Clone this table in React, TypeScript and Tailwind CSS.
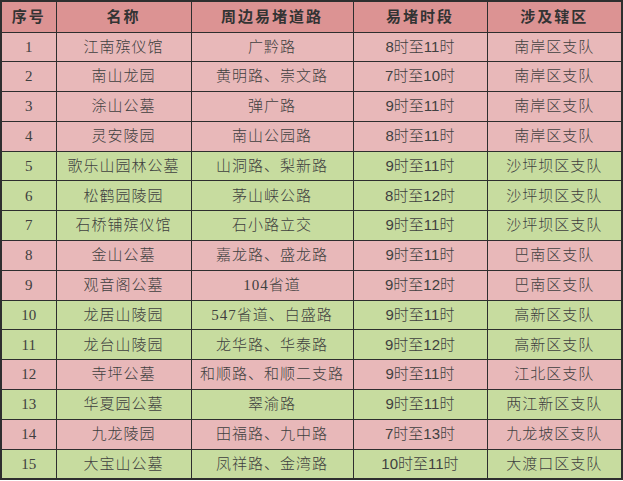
const rows: [string, string, string, string, string, boolean][] = [
  ["1", "江南殡仪馆", "广黔路", "8时至11时", "南岸区支队", false],
  ["2", "南山龙园", "黄明路、崇文路", "7时至10时", "南岸区支队", false],
  ["3", "涂山公墓", "弹广路", "9时至11时", "南岸区支队", false],
  ["4", "灵安陵园", "南山公园路", "8时至11时", "南岸区支队", false],
  ["5", "歌乐山园林公墓", "山洞路、梨新路", "9时至11时", "沙坪坝区支队", true],
  ["6", "松鹤园陵园", "茅山峡公路", "8时至12时", "沙坪坝区支队", true],
  ["7", "石桥铺殡仪馆", "石小路立交", "9时至11时", "沙坪坝区支队", true],
  ["8", "金山公墓", "嘉龙路、盛龙路", "9时至11时", "巴南区支队", false],
  ["9", "观音阁公墓", "104省道", "9时至12时", "巴南区支队", false],
  ["10", "龙居山陵园", "547省道、白盛路", "9时至11时", "高新区支队", true],
  ["11", "龙台山陵园", "龙华路、华泰路", "9时至12时", "高新区支队", true],
  ["12", "寺坪公墓", "和顺路、和顺二支路", "9时至11时", "江北区支队", false],
  ["13", "华夏园公墓", "翠渝路", "9时至11时", "两江新区支队", true],
  ["14", "九龙陵园", "田福路、九中路", "7时至13时", "九龙坡区支队", false],
  ["15", "大宝山公墓", "凤祥路、金湾路", "10时至11时", "大渡口区支队", true],
];

const serif = "font-['Liberation_Serif','Noto_Sans_CJK_SC',serif]";
const sans = "font-['Liberation_Sans','Noto_Sans_CJK_SC',sans-serif]";

export default function App() {
  return (
    <div className="w-[623px] h-[481px] bg-white">
      <table className="w-[621px] table-fixed border-collapse border-2 border-[#2e2e2e] text-[#404040]">
        <colgroup>
          <col className="w-[55px]" />
          <col className="w-[135px]" />
          <col className="w-[162px]" />
          <col className="w-[134px]" />
          <col className="w-[135px]" />
        </colgroup>
        <thead>
          <tr className="h-[31px] bg-[#dc9393]">
            {["序号", "名称", "周边易堵道路", "易堵时段", "涉及辖区"].map((h) => (
              <th
                key={h}
                className={`border border-[#2e2e2e] p-0 text-center text-[15px] font-bold tracking-[2px] text-[#333] ${serif}`}
              >
                {h}
              </th>
            ))}
          </tr>
        </thead>
        <tbody>
          {rows.map(([no, name, road, time, area, green]) => (
            <tr key={no} className={`h-[29.8px] ${green ? "bg-[#c7dc9f]" : "bg-[#e8b8b9]"}`}>
              <td className={`border border-[#2e2e2e] p-0 text-center text-[15px] ${serif}`}>{no}</td>
              <td className={`border border-[#2e2e2e] p-0 text-center text-[15px] font-light tracking-[1px] ${serif}`}>{name}</td>
              <td className={`border border-[#2e2e2e] p-0 text-center text-[15px] font-light tracking-[1px] ${serif}`}>{road}</td>
              <td className={`border border-[#2e2e2e] p-0 text-center text-[15px] font-light ${sans}`}>{time}</td>
              <td className={`border border-[#2e2e2e] p-0 text-center text-[15px] font-light tracking-[1px] ${serif}`}>{area}</td>
            </tr>
          ))}
        </tbody>
      </table>
    </div>
  );
}
